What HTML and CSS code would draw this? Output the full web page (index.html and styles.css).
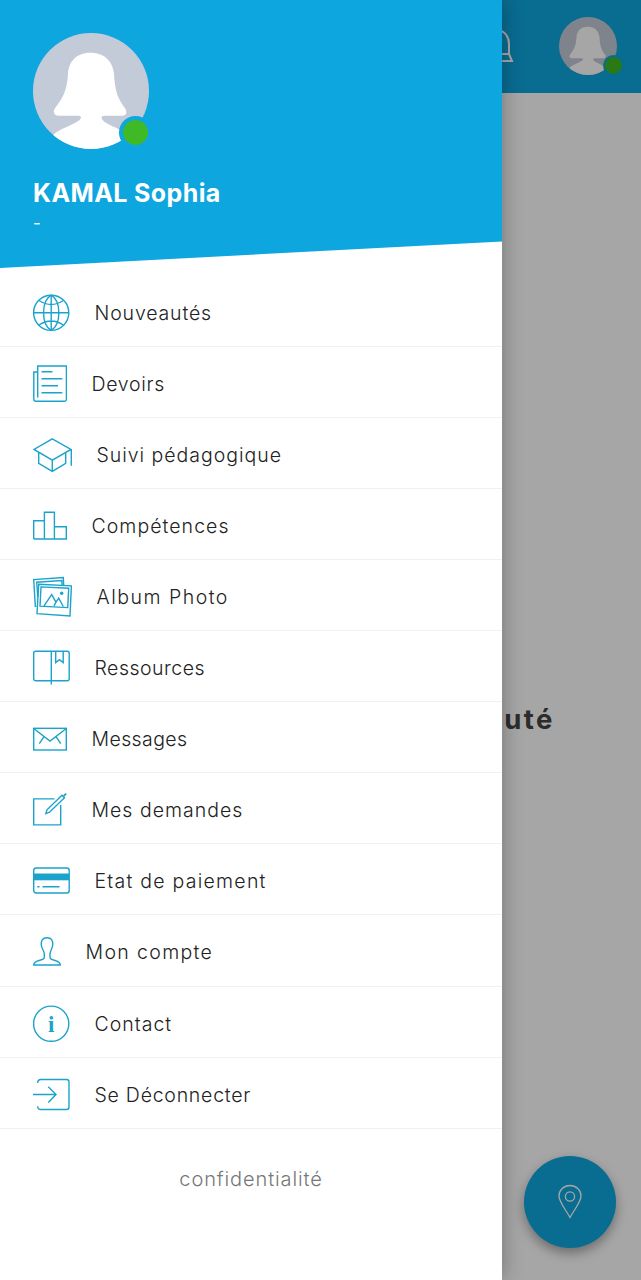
FILE: index.html
```html
<!DOCTYPE html>
<html lang="fr">
<head>
    <meta charset="UTF-8">
    <meta name="viewport" content="width=device-width, initial-scale=1.0">
    <title>Menu</title>
    <link rel="stylesheet" href="styles.css">
</head>
<body>
    <!-- formes communes aux deux avatars -->
    <svg class="defs" width="0" height="0">
        <symbol id="avatar" viewBox="0 0 116 116">
            <clipPath id="round"><circle cx="58" cy="58" r="58"/></clipPath>
            <g clip-path="url(#round)">
                <rect width="116" height="116" fill="#c4cbd8"/>
                <path fill="#fff" d="M57.5 19.7C43 19.7 35.5 29 35 41C34 59 29 66 21.5 76C19.500 80 22 82.700 26 82.700H46C48.500 82.700 48.500 86 46 87.500C38 93 28 95 20 102V118H92V100C84 94 74 92 69.500 87C67.500 84.500 69 82.700 71 82.700H89C93 82.700 94.500 80 92.500 76C85 66 82 59 81 41C80 29 72 19.700 57.500 19.700Z"/>
            </g>
        </symbol>
    </svg>

    <div class="page">
        <header class="topbar">
            <svg class="bell" width="32" height="36" viewBox="0 0 32 36">
                <path d="M16 2C9 3 5 9 5 16V26L2 33H30L27 26V16C27 9 23 3 16 2ZM5 26H27"/>
            </svg>
            <div class="avatar avatar-small">
                <svg width="58" height="58"><use href="#avatar"/></svg>
                <span class="status"></span>
            </div>
        </header>
        <main class="content">
            <h2>Aucune nouveauté</h2>
        </main>
        <button class="fab">
            <svg width="26" height="36" viewBox="0 0 26 36">
                <path d="M13 33.500C9 26 2 18 2 12A11 10.500 0 0 1 24 12C24 18 17 26 13 33.500Z"/>
                <circle cx="13" cy="12.500" r="4.600"/>
            </svg>
        </button>
    </div>

    <div class="overlay"></div>

    <aside class="drawer">
        <div class="profile">
            <div class="avatar avatar-big">
                <svg width="116" height="116"><use href="#avatar"/></svg>
                <span class="status"></span>
            </div>
            <h1>KAMAL Sophia</h1>
            <p>-</p>
        </div>
        <nav class="menu">
            <a class="item">
                <svg width="37" height="42" viewBox="0 0 37 42">
                    <circle cx="18.200" cy="20.800" r="17.600"/>
                    <path d="M18.200 3V38.500M.6 20.800H35.800M6 8.500Q18.200 16.500 30.400 8.500M6 33Q18.200 25 30.400 33"/>
                    <path d="M18.200 3.200C8 9 8 32.500 18.200 38.400C28.400 32.500 28.400 9 18.200 3.200Z"/>
                </svg>
                <span class="label nouveautes">Nouveautés</span>
            </a>
            <a class="item">
                <svg width="34" height="42" viewBox="0 0 34 42">
                    <path d="M4.700 9H.8V36Q.8 38.300 3 38.300H31.500Q33.400 38.300 33.400 36.400V3H4.700V34.500"/>
                    <path d="M8.500 8.700H19.500M8.500 15.700H29.300M8.500 22.700H25M8.500 29.700H29.300"/>
                </svg>
                <span class="label devoirs">Devoirs</span>
            </a>
            <a class="item">
                <svg width="39" height="42" viewBox="0 0 39 42">
                    <path d="M19.300 4.800L38 15.400L19.300 26.100L1 15.400ZM5.700 18.400V29.400L19.300 37.400L32.700 29.400V18.400M19.300 26.100V37.400M38.300 15.400V31.800"/>
                </svg>
                <span class="label suivi">Suivi pédagogique</span>
            </a>
            <a class="item">
                <svg width="34" height="42" viewBox="0 0 34 42">
                    <path d="M.7 34V15.700H11.400V34M11.400 15.700V7.300H21.400V34M21.400 21.700H33.300V34H.7"/>
                </svg>
                <span class="label competences">Compétences</span>
            </a>
            <a class="item">
                <svg width="39" height="42" viewBox="0 0 39 42">
                    <path d="M5.700 8.200L38.400 9.900L37 39.900L4 37.600ZM8 10.900L35.700 12.200L34.700 31.600L7 30.200Z"/>
                    <path d="M3.500 30.400H2.300L.7 3.600L30.300 1.600L30.700 9M4.800 21L3.700 6.200L28.800 4.600L29 9"/>
                    <path d="M11 29.800L18.700 18.600L23 26.200L25.700 22.200L30.300 30.500M23 26.200L21 29.800"/>
                    <circle class="solid" cx="28.700" cy="17.200" r="1.700"/>
                </svg>
                <span class="label album">Album Photo</span>
            </a>
            <a class="item">
                <svg width="37" height="42" viewBox="0 0 37 42">
                    <rect x=".7" y="4.200" width="35.500" height="29.600" rx="2"/>
                    <path d="M18.300 4.200V37.600M22.700 4.200V15.500L26.400 12.600L30.200 15.500V4.200"/>
                </svg>
                <span class="label ressources">Ressources</span>
            </a>
            <a class="item">
                <svg width="34" height="42" viewBox="0 0 34 42">
                    <rect x=".7" y="10.300" width="32.600" height="21.700"/>
                    <path d="M.7 10.500L17 23L33.300 10.500M11 18.700L6.300 25.700M23 18.700L27.700 25.700"/>
                </svg>
                <span class="label messages">Messages</span>
            </a>
            <a class="item">
                <svg width="34" height="42" viewBox="0 0 34 42">
                    <path d="M21.500 9.900H.7V35.900H27.700V16"/>
                    <path d="M12.800 24.600L14 20.800L29 6.200L31.500 8.700L16.500 23.200Z"/>
                    <path class="thick" d="M31.200 5.200L32.500 6.500"/>
                </svg>
                <span class="label demandes">Mes demandes</span>
            </a>
            <a class="item">
                <svg width="37" height="42" viewBox="0 0 37 42">
                    <rect x=".7" y="8" width="35.500" height="25" rx="2.500"/>
                    <rect class="solid" x=".7" y="13.500" width="35.500" height="6.800"/>
                    <path d="M4.300 26.800H6.500M9.500 26.800H26.500"/>
                </svg>
                <span class="label paiement">Etat de paiement</span>
            </a>
            <a class="item">
                <svg width="28" height="42" viewBox="0 0 28 42">
                    <path d="M14 6.700C9.500 6.700 8 9.500 8.300 14C8.500 18 11.300 19.500 11.300 23V26.500C11.300 30 .7 28.500 .7 34H27.300C27.300 28.500 17 30 17 26.500V23C17 19.500 19.500 18 19.700 14C20 9.500 18.500 6.700 14 6.700Z"/>
                </svg>
                <span class="label compte">Mon compte</span>
            </a>
            <a class="item">
                <svg width="37" height="42" viewBox="0 0 37 42">
                    <circle cx="18.200" cy="20.700" r="17.600"/>
                    <text x="18.200" y="28.500" text-anchor="middle">i</text>
                </svg>
                <span class="label contact">Contact</span>
            </a>
            <a class="item">
                <svg width="37" height="42" viewBox="0 0 37 42">
                    <path d="M4.700 9Q4.700 5.500 8 5.500H33.500Q36 5.500 36 8V33Q36 35.500 33.500 35.500H8Q4.700 35.500 4.700 32.200"/>
                    <path d="M0 20.500H23M15.300 12.700L23 20.500L15.300 28.400"/>
                </svg>
                <span class="label deconnecter">Se Déconnecter</span>
            </a>
        </nav>
        <a class="privacy">confidentialité</a>
    </aside>
</body>
</html>
```
FILE: styles.css
```css
* {
    box-sizing: border-box;
}
body {
    margin: 0;
    font-family: Inter, "Open Sans", sans-serif;
    background: #fff;
}
.defs {
    position: absolute;
}
.page {
    display: flex;
    flex-direction: column;
    height: 1280px;
}
.topbar {
    display: flex;
    justify-content: flex-end;
    align-items: center;
    gap: 45px;
    height: 93px;
    padding: 0 24px 2px 0;
    background: #0ea6df;
}
.bell {
    fill: none;
    stroke: #fff;
    stroke-width: 2;
}
.avatar {
    position: relative;
    width: fit-content;
}
.avatar svg {
    display: block;
}
/* pastille "en ligne" */
.status {
    position: absolute;
    border-radius: 50%;
    background: #3fba26;
    border: 4px solid #0ea6df;
}
.avatar-big .status {
    width: 33px;
    height: 33px;
    left: 86px;
    top: 83px;
}
.avatar-small .status {
    width: 21px;
    height: 21px;
    left: 44px;
    top: 38px;
    border-width: 2.5px;
}
.content {
    flex: 1;
    padding: 609px 86px 0 0;
}
.content h2 {
    margin: 0;
    text-align: right;
    font-size: 27.5px;
    line-height: 34px;
    font-weight: 700;
    letter-spacing: 2.5px;
    color: #444;
}
.fab {
    position: absolute;
    left: 524px;
    top: 1156px;
    display: flex;
    align-items: center;
    justify-content: center;
    width: 92px;
    height: 92px;
    padding: 0 0 1px;
    border: 0;
    border-radius: 50%;
    background: #0ea6df;
    box-shadow: 0 5px 12px rgba(0, 0, 0, 0.35);
}
.fab svg {
    fill: none;
    stroke: #fff;
    stroke-width: 1.3;
}
.overlay {
    position: absolute;
    inset: 0;
    height: 1280px;
    background: rgba(0, 0, 0, 0.35);
}
.drawer {
    position: absolute;
    left: 0;
    top: 0;
    width: 502px;
    height: 1280px;
    background: #fff;
    box-shadow: 0 0 20px rgba(0, 0, 0, 0.3);
}
.profile {
    height: 268px;
    padding: 33px 33px 0;
    color: #fff;
    background: #0ea6df;
    clip-path: polygon(0 0, 100% 0, 100% 241.5px, 0 268px);
}
.profile h1 {
    margin: 27px 0 0;
    font-size: 25px;
    line-height: 34px;
    font-weight: 700;
    letter-spacing: 0.4px;
    white-space: nowrap;
}
.profile p {
    margin: 4px 0 0;
    font-size: 17px;
    line-height: 18px;
}
.menu {
    padding-top: 7.6px;
}
.item {
    display: flex;
    align-items: center;
    gap: 24.5px;
    height: 71.1px;
    padding: 4px 33px 0;
    border-bottom: 1px solid #f1f1f1;
}
.item svg {
    flex: none;
    fill: none;
    stroke: #1ba3cc;
    stroke-width: 1.4;
}
.item svg .solid {
    fill: #1ba3cc;
    stroke: none;
}
.item svg .thick {
    stroke-width: 3.5;
}
.item svg text {
    fill: #1ba3cc;
    stroke: none;
    font: bold 23px "Liberation Serif", serif;
}
.label {
    font-size: 19.5px;
    line-height: 26px;
    font-weight: 300;
    color: #222;
    white-space: nowrap;
}
.nouveautes {
    letter-spacing: 0.85px;
}
.devoirs {
    letter-spacing: 0.7px;
}
.suivi {
    letter-spacing: 0.98px;
}
.competences {
    letter-spacing: 1.05px;
}
.album {
    letter-spacing: 1.5px;
}
.ressources {
    letter-spacing: 0.5px;
}
.messages {
    letter-spacing: 0.4px;
}
.demandes {
    letter-spacing: 1px;
}
.paiement {
    letter-spacing: 1.25px;
}
.compte {
    letter-spacing: 1.35px;
}
.contact {
    letter-spacing: 1px;
}
.deconnecter {
    letter-spacing: 0.75px;
}
.privacy {
    display: block;
    margin-top: 37px;
    text-align: center;
    font-size: 20px;
    line-height: 26px;
    font-weight: 300;
    letter-spacing: 0.88px;
    color: #777;
}
```
